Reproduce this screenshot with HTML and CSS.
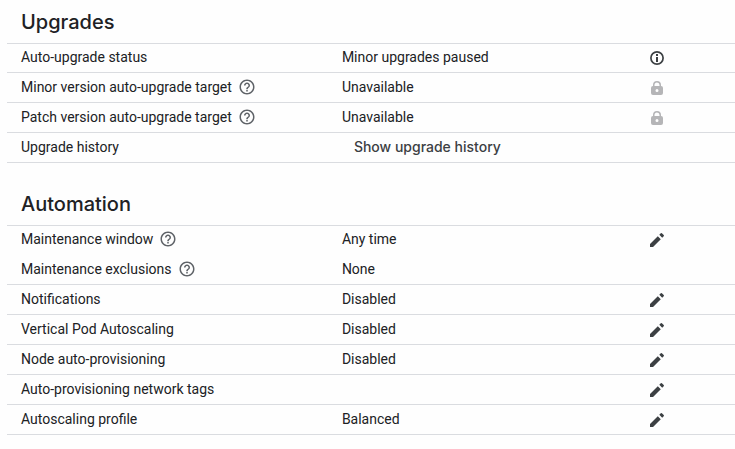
FILE: index.html
```html
<!DOCTYPE html>
<html lang="en">
<head>
  <meta charset="UTF-8">
  <meta name="viewport" content="width=device-width, initial-scale=1">
  <title>Cluster details</title>
  <link rel="stylesheet" href="styles.css">
</head>
<body>
  <!-- icon shapes shared by the rows -->
  <svg class="sprite" aria-hidden="true">
    <symbol id="help" viewBox="0 0 24 24">
      <path d="M11 18h2v-2h-2v2zm1-16C6.480 2 2 6.480 2 12s4.480 10 10 10 10-4.480 10-10S17.520 2 12 2zm0 18c-4.410 0-8-3.590-8-8s3.590-8 8-8 8 3.590 8 8-3.590 8-8 8zm0-14c-2.210 0-4 1.790-4 4h2c0-1.100.9-2 2-2s2 .9 2 2c0 2-3 1.750-3 5h2c0-2.250 3-2.500 3-5 0-2.210-1.790-4-4-4z"/>
    </symbol>
    <symbol id="info" viewBox="0 0 14 14">
      <circle cx="7" cy="7" r="6.1" fill="none" stroke="currentColor" stroke-width="1.7"/>
      <path d="M6 3h2v2H6zM6 6h2v5H6z"/>
    </symbol>
    <symbol id="lock" viewBox="0 0 14 14">
      <path d="M3 5V4a4 4 0 0 1 8 0v1a2 2 0 0 1 2 2v5a2 2 0 0 1-2 2H3a2 2 0 0 1-2-2V7a2 2 0 0 1 2-2zm1.500 0h5V4a2.500 2.500 0 0 0-5 0zM7 8a1.500 1.500 0 1 0 0 3 1.500 1.500 0 0 0 0-3z" fill-rule="evenodd"/>
    </symbol>
    <symbol id="edit" viewBox="0 0 14 14">
      <path d="M0 11v3h3l7.800-7.800-3-3zM13.700 3.200a.8.8 0 0 0 0-1.100L11.900.3a.8.8 0 0 0-1.100 0L9.300 1.800l2.900 2.900z"/>
    </symbol>
  </svg>

  <main>
    <section>
      <h2>Upgrades</h2>
      <table>
        <tr>
          <th scope="row">Auto-upgrade status</th>
          <td>Minor upgrades paused</td>
          <td class="action"><button class="icon-btn" aria-label="Auto-upgrade info"><svg><use href="#info"/></svg></button></td>
        </tr>
        <tr>
          <th scope="row"><span class="label">Minor version auto-upgrade target <button class="help" aria-label="Help"><svg><use href="#help"/></svg></button></span></th>
          <td>Unavailable</td>
          <td class="action"><button class="icon-btn" disabled aria-label="Locked"><svg><use href="#lock"/></svg></button></td>
        </tr>
        <tr>
          <th scope="row"><span class="label">Patch version auto-upgrade target <button class="help" aria-label="Help"><svg><use href="#help"/></svg></button></span></th>
          <td>Unavailable</td>
          <td class="action"><button class="icon-btn" disabled aria-label="Locked"><svg><use href="#lock"/></svg></button></td>
        </tr>
        <tr>
          <th scope="row">Upgrade history</th>
          <td><button class="text-btn">Show upgrade history</button></td>
          <td class="action"></td>
        </tr>
      </table>
    </section>

    <section>
      <h2>Automation</h2>
      <table>
        <tr class="joined">
          <th scope="row"><span class="label">Maintenance window <button class="help" aria-label="Help"><svg><use href="#help"/></svg></button></span></th>
          <td>Any time</td>
          <td class="action"><button class="icon-btn" aria-label="Edit maintenance window"><svg><use href="#edit"/></svg></button></td>
        </tr>
        <tr>
          <th scope="row"><span class="label">Maintenance exclusions <button class="help" aria-label="Help"><svg><use href="#help"/></svg></button></span></th>
          <td>None</td>
          <td class="action"></td>
        </tr>
        <tr>
          <th scope="row">Notifications</th>
          <td>Disabled</td>
          <td class="action"><button class="icon-btn" aria-label="Edit notifications"><svg><use href="#edit"/></svg></button></td>
        </tr>
        <tr>
          <th scope="row">Vertical Pod Autoscaling</th>
          <td>Disabled</td>
          <td class="action"><button class="icon-btn" aria-label="Edit vertical pod autoscaling"><svg><use href="#edit"/></svg></button></td>
        </tr>
        <tr>
          <th scope="row">Node auto-provisioning</th>
          <td>Disabled</td>
          <td class="action"><button class="icon-btn" aria-label="Edit node auto-provisioning"><svg><use href="#edit"/></svg></button></td>
        </tr>
        <tr>
          <th scope="row">Auto-provisioning network tags</th>
          <td></td>
          <td class="action"><button class="icon-btn" aria-label="Edit network tags"><svg><use href="#edit"/></svg></button></td>
        </tr>
        <tr>
          <th scope="row">Autoscaling profile</th>
          <td>Balanced</td>
          <td class="action"><button class="icon-btn" aria-label="Edit autoscaling profile"><svg><use href="#edit"/></svg></button></td>
        </tr>
      </table>
    </section>
  </main>
</body>
</html>
```
FILE: styles.css
```css
* {
  box-sizing: border-box;
}
body {
  margin: 0;
  background: #fefefe;
  color: #202124;
  font-family: Roboto, sans-serif;
  font-size: 14px;
  line-height: 20px;
}
.sprite {
  display: none;
}
main {
  padding: 8px 0 0 7px;
}
section {
  margin-bottom: 27px;
}
h2 {
  margin: 0;
  padding: 0 14px 7px;
  font-family: Inter, sans-serif;
  font-size: 20px;
  font-weight: 500;
  line-height: 28px;
}
table {
  width: 100%;
  table-layout: fixed;
  border-spacing: 0;
}
th,
td {
  height: 30px;
  padding: 4px 0 5px;
  border-bottom: 1px solid #dadce0;
  font-weight: 400;
  text-align: left;
  vertical-align: bottom;
}
tr:first-child th,
tr:first-child td {
  padding-top: 3px;
  border-top: 1px solid #dadce0;
}
.joined th,
.joined td {
  padding-bottom: 6px;
  border-bottom: 0;
}
th {
  width: 46%;
  padding-left: 14px;
}
.action {
  width: 85px;
}
.label {
  display: flex;
  align-items: center;
  gap: 6px;
}
button {
  padding: 0;
  border: 0;
  background: none;
  color: #3c4043;
  cursor: pointer;
}
button:disabled {
  color: #b5b5b7;
  cursor: default;
}
svg {
  display: block;
  width: 100%;
  height: 100%;
  fill: currentColor;
}
.help {
  width: 18px;
  height: 18px;
  color: #5f6368;
}
.icon-btn {
  display: block;
  width: 14px;
  height: 14px;
  margin-bottom: 2px;
}
.text-btn {
  display: block;
  padding: 0 12px;
  font-family: Inter, sans-serif;
  font-size: 14px;
  font-weight: 500;
  line-height: 20px;
}
```
